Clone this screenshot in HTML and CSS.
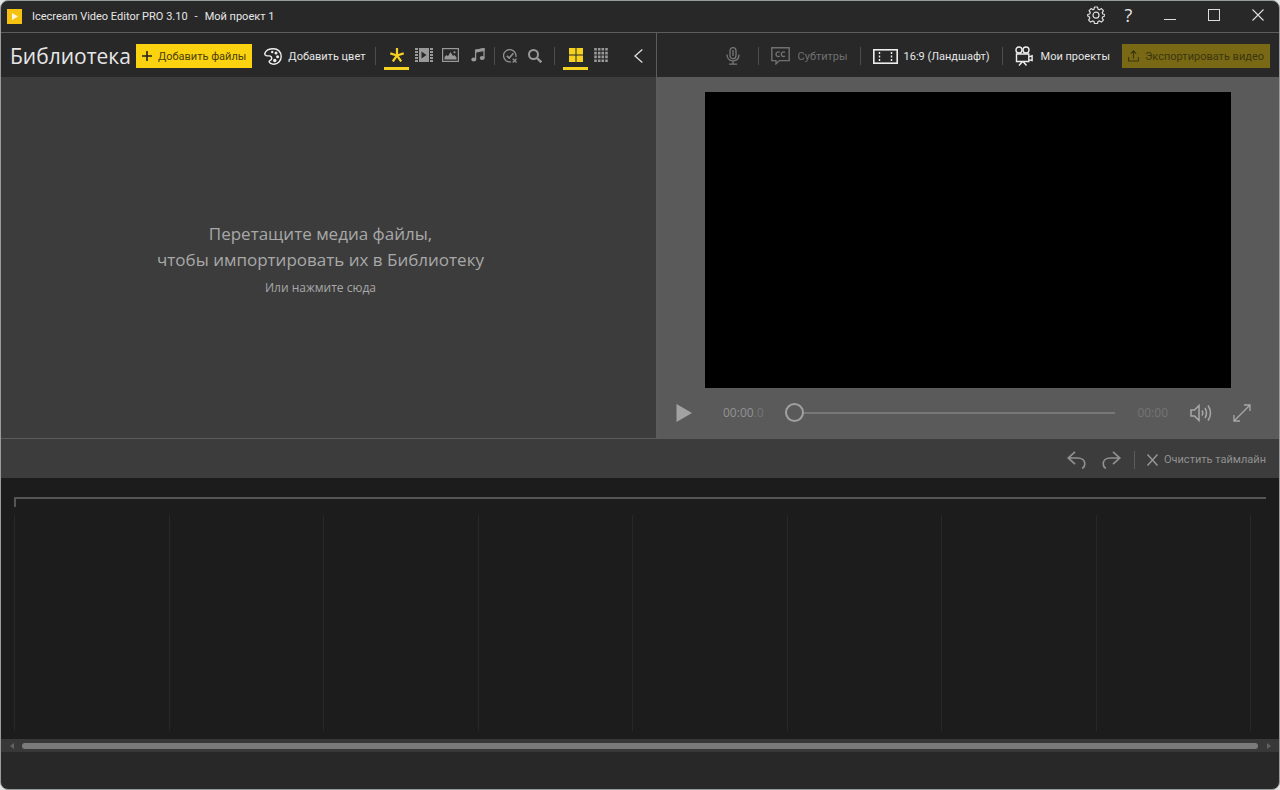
FILE: index.html
```html
<!DOCTYPE html>
<html lang="ru">
<head>
  <meta charset="UTF-8">
  <title>Icecream Video Editor PRO 3.10 - Мой проект 1</title>
  <link rel="stylesheet" href="styles.css">
</head>
<body>

<div class="window">

  <header class="titlebar">
    <svg class="logo" width="15" height="15" viewBox="0 0 15 15">
      <rect width="15" height="15" fill="#f5c211"/>
      <path d="M5 4l6 3.500l-6 3.500z" fill="#fff8dc"/>
    </svg>
    <span class="app-name">Icecream Video Editor PRO 3.10</span>
    <span class="dash">-</span>
    <span>Мой проект 1</span>
    <div class="window-buttons">
      <button class="win-btn" aria-label="Настройки">
        <svg width="18" height="18" viewBox="0 0 18 18" fill="none" stroke="#ddd" stroke-width="1.200" stroke-linejoin="round">
          <path d="M7.500 1h3l.5 2.200 1.400.6 2-1.200 2 2-1.200 2 .6 1.400 2 .5v1.500l-2 .7-.6 1.400 1.200 2-2 2-2-1.200-1.400.6-.5 2.100h-3l-.5-2.100-1.400-.6-2 1.200-2-2 1.200-2-.6-1.400L.7 10V8.500l2-.5.6-1.400-1.200-2 2-2 2 1.200L7 3.200z"/>
          <circle cx="9" cy="9.200" r="3"/>
        </svg>
      </button>
      <button class="win-btn help" aria-label="Справка">?</button>
      <button class="win-btn wide" aria-label="Свернуть">
        <svg width="12" height="12" viewBox="0 0 12 12"><path d="M0 10.500h12" stroke="#ddd"/></svg>
      </button>
      <button class="win-btn wide" aria-label="Развернуть">
        <svg width="12" height="12" viewBox="0 0 12 12"><rect x=".5" y=".5" width="11" height="11" fill="none" stroke="#ddd"/></svg>
      </button>
      <button class="win-btn wide" aria-label="Закрыть">
        <svg width="12" height="12" viewBox="0 0 12 12"><path d="M.5.5l11 11M11.500.5l-11 11" stroke="#ddd" stroke-width="1.100"/></svg>
      </button>
    </div>
  </header>

  <main class="workspace">

    <!-- Библиотека -->
    <section class="library">
      <div class="toolbar">
        <h1>Библиотека</h1>
        <button class="btn-yellow add-files">
          <svg width="10" height="10" viewBox="0 0 10 10"><path d="M5 0v10M0 5h10" stroke="#222" stroke-width="1.600"/></svg>
          Добавить файлы
        </button>
        <button class="tool-btn">
          <svg width="18" height="17" viewBox="0 0 18 17" fill="none" stroke="#eee" stroke-width="1.400">
            <path d="M.8 5.500C1.800 2.500 5 .8 9.500.8c4.300 0 7.700 3 7.700 7.600 0 4.600-3.400 7.800-7.400 7.800-3 0-5-1.700-4.600-3 .3-1 2-.9 2.400-2.200.5-1.600-.7-3.200-2.600-3.100C3.500 8 .3 7.700.8 5.500z"/>
            <circle cx="8.200" cy="4" r="1.200" fill="#eee" stroke="none"/>
            <circle cx="12" cy="5" r="1.500" fill="#eee" stroke="none"/><circle cx="13.600" cy="8.800" r="1.500" fill="#eee" stroke="none"/>
            <circle cx="10.800" cy="12.500" r="1.700" fill="#eee" stroke="none"/>
          </svg>
          Добавить цвет
        </button>
        <span class="sep"></span>
        <div class="tabs">
          <button class="tab active" aria-label="Все">
            <svg width="14" height="14" viewBox="0 0 14 14"><path d="M7 7.500V0M7 7.500L.3 5.400M7 7.500l6.700-2.100M7 7.500l-4.200 6M7 7.500l4.200 6" stroke="#f5d21f" stroke-width="2.200"/></svg>
          </button>
          <button class="tab" aria-label="Видео">
            <svg width="18" height="14" viewBox="0 0 18 14" fill="#999">
              <path d="M0 0h3v2H0zM0 3h3v2H0zM0 6h3v2H0zM0 9h3v2H0zM0 12h3v2H0zM15 0h3v2h-3zM15 3h3v2h-3zM15 6h3v2h-3zM15 9h3v2h-3zM15 12h3v2h-3zM4 0h10v14H4z"/>
              <path d="M6.500 3.500l5 3.500-5 3.500z" fill="#282828"/>
            </svg>
          </button>
          <button class="tab" aria-label="Изображения">
            <svg width="17" height="14" viewBox="0 0 17 14">
              <rect x=".6" y=".6" width="15.800" height="12.800" fill="none" stroke="#999" stroke-width="1.200"/>
              <path d="M2.500 11.500V9l2-2 1.500 1.200L8.500 4l2.500 4 1.500-1 2 2.500v2z" fill="#999"/><circle cx="12.500" cy="4.300" r="1.100" fill="#999"/>
            </svg>
          </button>
          <button class="tab" aria-label="Аудио">
            <svg width="14" height="14" viewBox="0 0 14 14"><path d="M4.600 11.300V2.200L13 .6v9" fill="none" stroke="#999" stroke-width="1.300"/><path d="M4.300 1.800L13.400.1v3L4.300 4.800z" fill="#999"/><ellipse cx="2.800" cy="11.500" rx="2.500" ry="2" fill="#999"/><ellipse cx="11.200" cy="9.900" rx="2.500" ry="2" fill="#999"/></svg>
          </button>
        </div>
        <span class="sep tight"></span>
        <button class="icon-btn" aria-label="Снять выделение">
          <svg width="14" height="14" viewBox="0 0 14 14" fill="none" stroke="#8f8f8f" stroke-width="1.300">
            <path d="M8 12.800A6.200 6.200 0 1 1 12.800 8"/><path d="M3.800 6.800l2.400 2.300 4.200-4.800" stroke-width="1.600"/><path d="M9.700 9.700l3.800 3.800M13.500 9.700l-3.800 3.800"/>
          </svg>
        </button>
        <button class="icon-btn" aria-label="Поиск">
          <svg width="14" height="14" viewBox="0 0 14 14" fill="none" stroke="#999"><circle cx="5.500" cy="5.500" r="4.500" stroke-width="2"/><path d="M9 9l4.300 4.300" stroke-width="2.400"/></svg>
        </button>
        <span class="sep"></span>
        <div class="views">
          <button class="tab active" aria-label="Крупные значки">
            <svg width="14" height="14" viewBox="0 0 14 14" fill="#f5d21f"><path d="M0 0h6.500v6.500H0zM7.500 0H14v6.500H7.500zM0 7.500h6.500V14H0zM7.500 7.500H14V14H7.500z"/></svg>
          </button>
          <button class="tab" aria-label="Мелкие значки">
            <svg width="14" height="14" viewBox="0 0 14 14"><path d="M1.500 0v14M5.200 0v14M8.800 0v14M12.500 0v14" stroke="#999" stroke-width="2.600" stroke-dasharray="2.600 1.200"/></svg>
          </button>
        </div>
        <button class="collapse" aria-label="Свернуть панель">
          <svg width="9" height="14" viewBox="0 0 9 14"><path d="M8.300.5L1 7l7.300 6.500" fill="none" stroke="#ddd" stroke-width="1.300"/></svg>
        </button>
      </div>
      <div class="dropzone">
        <p>Перетащите медиа файлы,<br>чтобы импортировать их в Библиотеку</p>
        <button class="browse">Или нажмите сюда</button>
      </div>
    </section>

    <!-- Просмотр -->
    <section class="preview">
      <div class="toolbar right">
        <button class="tool-btn" disabled aria-label="Запись голоса">
          <svg width="14" height="18" viewBox="0 0 14 18" fill="none" stroke="#777" stroke-width="1.300"><rect x="4" y=".7" width="6" height="11" rx="3"/><path d="M1 7.500c0 4 2 6.300 6 6.300s6-2.300 6-6.300M7 13.800V17M3 17.200h8M7 3v6"/></svg>
        </button>
        <span class="sep"></span>
        <button class="tool-btn cc" disabled>
          <svg width="19" height="18" viewBox="0 0 19 18" fill="none" stroke="#707070" stroke-width="1.400"><path d="M.8.8h17.400v12.800H8.500L5 16.800v-3.200H.8z"/><path d="M8.700 5.400C7.300 4.300 5 5 5 7.200s2.300 2.900 3.700 1.800M14 5.400c-1.400-1.100-3.700-.4-3.700 1.800s2.300 2.900 3.700 1.800"/></svg>
          Субтитры
        </button>
        <span class="sep"></span>
        <button class="tool-btn">
          <svg width="25" height="15" viewBox="0 0 25 15" fill="none" stroke="#eee"><rect x=".8" y=".8" width="23.400" height="13.400" stroke-width="1.600"/><path d="M6.500 3v10M18.500 3v10" stroke-width="1.400" stroke-dasharray="2 1.500"/></svg>
          16:9 (Ландшафт)
        </button>
        <span class="sep"></span>
        <button class="tool-btn projects">
          <svg width="18" height="20" viewBox="0 0 18 20" fill="none" stroke="#eee" stroke-width="1.400"><circle cx="4" cy="4" r="3"/><circle cx="11" cy="4" r="3"/><path d="M1.500 8h12.300v7.500H1.500zM13.800 10.800l3.300-1v4.800l-3.300-1M7.500 15.500L4 19.500M8 15.500l3.500 4"/></svg>
          Мои проекты
        </button>
        <button class="btn-yellow export" disabled>
          <svg width="11" height="12" viewBox="0 0 11 12" fill="none" stroke="#3c360f" stroke-width="1.100"><path d="M.6 7v4h9.800V7M5.500 8.500V1M2.800 3.600L5.500.9l2.700 2.700"/></svg>
          Экспортировать видео
        </button>
      </div>
      <div class="player">
        <div class="screen"></div>
        <div class="controls">
          <button class="icon-btn" aria-label="Воспроизвести">
            <svg width="16" height="18" viewBox="0 0 16 18"><path d="M.5 0L16 9 .5 18z" fill="#a2a2a2"/></svg>
          </button>
          <span class="time">00:00<span class="dim">.0</span></span>
          <input type="range" class="seek" min="0" max="100" value="0" aria-label="Позиция">
          <span class="total">00:00</span>
          <button class="icon-btn volume" aria-label="Громкость">
            <svg width="22" height="18" viewBox="0 0 22 18" fill="none" stroke="#a8a8a8" stroke-width="1.500"><path d="M1 6h3.500L9 1.500v15L4.500 12H1z"/><path d="M12 6.500q1.500 2.500 0 5M15 4q3 5 0 10M18 1.500q5 7.500 0 15"/></svg>
          </button>
          <button class="icon-btn" aria-label="Во весь экран">
            <svg width="18" height="18" viewBox="0 0 18 18" fill="none" stroke="#a8a8a8" stroke-width="1.300"><path d="M1 17L17 1M11 1h6v6M1 11v6h6"/></svg>
          </button>
        </div>
      </div>
    </section>
  </main>

  <!-- Таймлайн -->
  <div class="edit-bar">
    <button class="icon-btn" aria-label="Отменить">
      <svg width="19" height="18" viewBox="0 0 19 18" fill="none" stroke="#909090" stroke-width="1.700"><path d="M8 .8L1.200 7 8 13.200M1.200 7h9.300c4.600 0 7.300 2.500 7.300 5.800 0 2.200-1 3.700-2.600 4.700"/></svg>
    </button>
    <button class="icon-btn" aria-label="Повторить">
      <svg width="19" height="18" viewBox="0 0 19 18" fill="none" stroke="#909090" stroke-width="1.700"><path d="M11 .8L17.800 7 11 13.200M17.800 7H8.500C3.900 7 1.200 9.500 1.200 12.800c0 2.200 1 3.700 2.600 4.700"/></svg>
    </button>
    <span class="sep"></span>
    <button class="tool-btn">
      <svg width="11" height="12" viewBox="0 0 11 12"><path d="M.5.5l10 11M10.500.5l-10 11" stroke="#999" stroke-width="1.400"/></svg>
      Очистить таймлайн
    </button>
  </div>

  <section class="timeline">
    <div class="ruler"></div>
    <div class="ticks">
      <i></i><i></i><i></i><i></i><i></i><i></i><i></i><i></i><i></i>
    </div>
  </section>

  <div class="scrollbar">
    <button class="scroll-arrow" aria-label="Влево"><svg width="4" height="6" viewBox="0 0 4 6"><path d="M4 0v6L0 3z" fill="#626262"/></svg></button>
    <div class="scroll-thumb"></div>
    <button class="scroll-arrow" aria-label="Вправо"><svg width="4" height="6" viewBox="0 0 4 6"><path d="M0 0v6l4-3z" fill="#626262"/></svg></button>
  </div>

  <footer class="statusbar"></footer>
</div>

</body>
</html>
```

FILE: styles.css
```css
* {
  box-sizing: border-box;
}
body {
  margin: 0;
  background: #e4e6e6;
  font-family: Roboto, "Open Sans", sans-serif;
  font-size: 11px;
  color: #e6e6e6;
}
button {
  margin: 0;
  padding: 0;
  border: none;
  background: none;
  color: inherit;
  font: inherit;
  white-space: nowrap;
  display: flex;
  align-items: center;
  justify-content: center;
}
svg {
  display: block;
  flex-shrink: 0;
}
.window {
  display: flex;
  flex-direction: column;
  min-height: 100vh;
  border: 1px solid #979c9c;
  border-radius: 8px;
  background: #282828;
  overflow: hidden;
}

/* title bar */
.titlebar {
  display: flex;
  align-items: center;
  height: 32px;
  padding-left: 6px;
  border-bottom: 1px solid #5c5c5c;
}
.app-name {
  margin-left: 10px;
}
.dash {
  margin: 0 7px;
}
.window-buttons {
  display: flex;
  height: 28px;
  margin: 0 -1px 4px auto;
}
.win-btn {
  width: 33px;
}
.win-btn.wide {
  width: 44px;
}
.win-btn.help {
  margin-right: 3px;
  font-family: "Open Sans", sans-serif;
  font-size: 18px;
}

/* toolbars */
.workspace {
  display: grid;
  grid-template-columns: 656fr 622fr;
  border-bottom: 1px solid #5c5c5c;
}
.library,
.preview {
  display: flex;
  flex-direction: column;
  min-width: 0;
}
.toolbar {
  display: flex;
  align-items: center;
  height: 44px;
  padding: 2px 9px 0;
}
.library {
  border-right: 1px solid #5c5c5c;
}
.toolbar h1 {
  margin: 0 5px 0 0;
  font-family: "Open Sans", sans-serif;
  font-size: 21px;
  font-weight: 400;
  line-height: 24px;
}
.btn-yellow {
  height: 24px;
  gap: 6px;
  padding: 0 6px;
  background: #fad20f;
  color: #4b400a;
}
.tool-btn {
  gap: 6px;
}
.add-files {
  margin-right: 12px;
}
.sep {
  width: 1px;
  height: 18px;
  margin: 0 10px;
  background: #4e4e4e;
}
.tabs,
.views {
  display: flex;
  margin-left: -2px;
}
.tabs {
  gap: 2px;
}
.tab {
  width: 25px;
  height: 28px;
  border-top: 1px solid transparent;
  border-bottom: 3px solid transparent;
}
.tab.active {
  border-bottom-color: #f5d21f;
}
.sep.tight {
  margin: 0 2px 0 4px;
}
.icon-btn {
  width: 25px;
  height: 24px;
}
.icon-btn + .sep {
  margin-left: 7px;
}
.collapse {
  width: 18px;
  height: 24px;
  margin-left: auto;
}
.toolbar.right {
  justify-content: flex-end;
}
.toolbar.right .sep {
  margin: 0 12px;
}
.tool-btn:disabled {
  color: #707070;
}
.toolbar.right .tool-btn:first-child {
  padding-right: 6px;
}
.cc,
.projects {
  gap: 8px;
}
.export {
  margin-left: 12px;
  background: #796914;
  color: #3c360f;
}

/* library */
.dropzone {
  flex: 1;
  display: flex;
  flex-direction: column;
  align-items: center;
  justify-content: center;
  padding: 3px 16px 0 0;
  background: #3c3c3c;
  color: #a8a8a8;
  font-family: "Open Sans", sans-serif;
  text-align: center;
}
.dropzone p {
  margin: 0 0 7px;
  font-size: 17px;
  line-height: 26px;
}
.browse {
  font-size: 12px;
  line-height: 16px;
}

/* player */
.player {
  padding: 15px 0 0;
  background: #5a5a5a;
}
.screen {
  margin: 0 48px;
  aspect-ratio: 16 / 9;
  background: #000;
}
.controls {
  display: flex;
  align-items: center;
  height: 50px;
  padding: 0 25px 0 14px;
  font-family: "Open Sans", sans-serif;
}
.time {
  width: 62px;
  margin-left: 27px;
  font-size: 12px;
  color: #929292;
}
.time .dim {
  color: #747474;
}
.seek {
  -webkit-appearance: none;
  appearance: none;
  flex: 1;
  min-width: 0;
  height: 20px;
  margin: 0;
  background: none;
}
.seek::-webkit-slider-runnable-track {
  height: 2px;
  background: #787878;
}
.seek::-webkit-slider-thumb {
  -webkit-appearance: none;
  width: 19px;
  height: 19px;
  margin-top: -9px;
  border: 2px solid #a0a0a0;
  border-radius: 50%;
  background: #5a5a5a;
}
.total {
  margin-left: 22px;
  font-size: 12px;
  color: #747474;
}
.volume {
  margin: 0 16px 0 20px;
}

/* timeline */
.edit-bar {
  display: flex;
  align-items: center;
  justify-content: flex-end;
  height: 39px;
  padding: 3px 13px 0 0;
  background: #3c3c3c;
  color: #909090;
}
.edit-bar .icon-btn {
  width: 35px;
}
.edit-bar .icon-btn + .sep {
  margin: 0 12px 0 5px;
  background: #5c5c5c;
}
.timeline {
  flex: 1;
  display: flex;
  flex-direction: column;
  padding: 19px 13px 8px;
  background: #1c1c1c;
}
.ruler {
  height: 10px;
  border: solid #555;
  border-width: 2px 0 0 2px;
}
.ticks {
  flex: 1;
  display: grid;
  grid-template-columns: repeat(8, 1fr) 16px;
  margin-top: 8px;
}
.ticks i {
  border-left: 1px solid #282828;
}
.scrollbar {
  display: flex;
  align-items: center;
  height: 13px;
  background: #383838;
}
.scroll-arrow {
  width: 21px;
  height: 13px;
}
.scroll-thumb {
  flex: 1;
  height: 6px;
  border-radius: 3px;
  background: #7a7a7a;
}
.statusbar {
  height: 37px;
}
```
